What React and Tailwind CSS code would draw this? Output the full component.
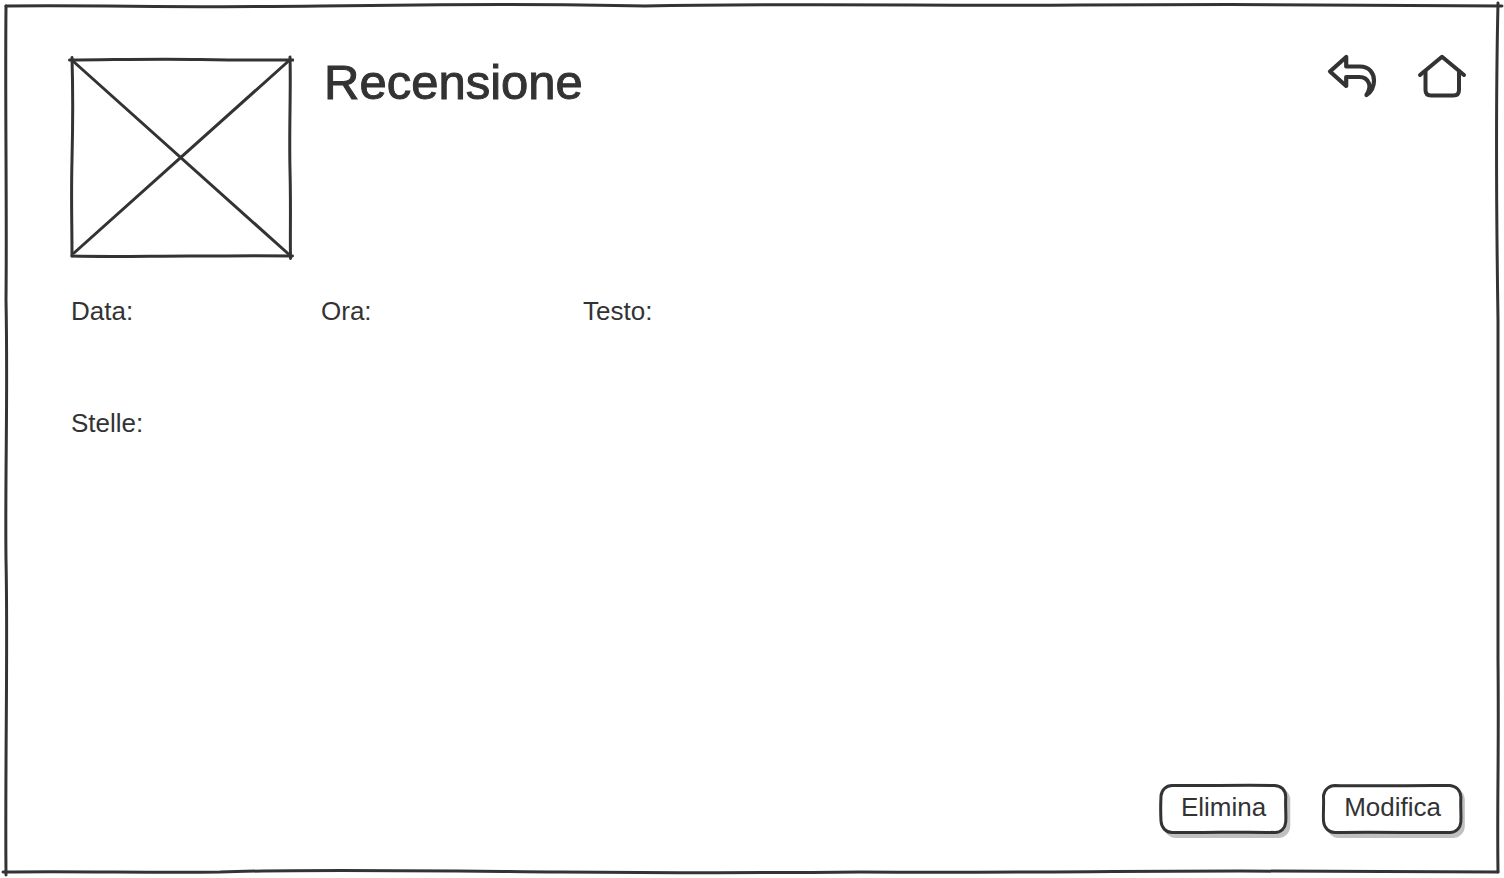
const INK = "#333333";

function Frame() {
  return (
    <svg
      className="pointer-events-none absolute inset-0 h-full w-full"
      viewBox="0 0 1504 878"
      preserveAspectRatio="none"
      fill="none"
      stroke={INK}
      strokeWidth="3"
      strokeLinecap="round"
      aria-hidden="true"
    >
      <path d="M6 6 C110 5 180 8 320 6 C450 4 570 4 645 6 C800 3 940 6 1080 5 S1380 5 1502 6" />
      <path d="M1498 3 C1496 90 1496 190 1498 320 C1499 440 1497 560 1498 660 S1497 800 1498 872" />
      <path d="M3 872 C80 871 150 873 220 872 C300 869 440 871 560 872 S760 873 860 872 C1020 873 1100 871 1240 871 S1420 872 1498 872" />
      <path d="M6 6 C5 110 7 200 6 300 C8 400 5 470 6 560 C8 650 5 760 6 875" />
    </svg>
  );
}

function ImagePlaceholder() {
  return (
    <svg
      className="h-[206px] w-[226px] shrink-0"
      viewBox="68 54 226 206"
      fill="none"
      stroke={INK}
      strokeWidth="3"
      strokeLinecap="round"
      role="img"
      aria-label="Immagine"
    >
      <path d="M69.500 60 C110 60 150 58.500 200 59.500 S260 60 293 60" />
      <path d="M290 57 C291 90 289 130 290 170 S290 230 290.500 258.500" />
      <path d="M72 256 C110 257 150 256 190 256 S250 255.500 292.500 256" />
      <path d="M72 57.500 C73 90 73 120 72 160 S72 220 72 256" />
      <path d="M74 62 L288.500 254" />
      <path d="M288 61.500 L74 253" />
    </svg>
  );
}

function BackIcon() {
  return (
    <svg
      className="h-[46px] w-[50px]"
      viewBox="1327 53 50 46"
      fill="none"
      stroke={INK}
      strokeWidth="4.2"
      strokeLinecap="round"
      strokeLinejoin="round"
      aria-hidden="true"
    >
      <path d="M1330 71.500 L1346.200 57 V66.500 H1360 C1369.500 66.500 1374 73.500 1374 80.500 C1374 87.500 1371 92 1366.500 95 C1369.500 90.500 1370.500 87 1368.800 83 C1367 78.500 1363.500 77 1359.500 77 H1346.200 V86 Z" />
    </svg>
  );
}

function HomeIcon() {
  return (
    <svg
      className="h-[46px] w-[50px]"
      viewBox="1417 53 50 46"
      fill="none"
      stroke={INK}
      strokeWidth="4"
      strokeLinecap="round"
      strokeLinejoin="round"
      aria-hidden="true"
    >
      <path d="M1420 75 L1442 56.800 L1464 75" />
      <path d="M1425.500 71 V90 Q1425.500 95.500 1431 95.500 H1453.500 Q1459 95.500 1459 90 V71" />
    </svg>
  );
}

function SketchButton({ children, width, outline }) {
  return (
    <button
      type="button"
      className="relative h-[50px] px-[21px] pb-1 text-[26px] leading-7"
    >
      <svg
        className="absolute inset-0 h-full w-full overflow-visible"
        viewBox={`0 0 ${width} 50`}
        preserveAspectRatio="none"
        strokeWidth="3"
        strokeLinejoin="round"
        aria-hidden="true"
      >
        <rect x="4" y="4" width={width - 1} height="50" rx="12" fill="#c0c0c0" />
        <path d={outline} fill="white" stroke={INK} />
      </svg>
      <span className="relative">{children}</span>
    </button>
  );
}

export default function App() {
  return (
    <div className="relative flex min-h-screen flex-col bg-white font-['Liberation_Sans',Arial,sans-serif] text-[#333333]">
      <Frame />
      <header className="flex items-start pt-[53px] pr-[37px] pl-[68px]">
        <div className="pt-px">
          <ImagePlaceholder />
        </div>
        <h1 className="ml-[30px] pt-px text-[49px] leading-14 font-normal [-webkit-text-stroke:1px_#333333]">
          Recensione
        </h1>
        <nav className="ml-auto flex gap-10">
          <a href="#indietro" aria-label="Indietro">
            <BackIcon />
          </a>
          <a href="#home" aria-label="Home">
            <HomeIcon />
          </a>
        </nav>
      </header>
      <main className="mt-[37px] grid grid-cols-[250px_262px_1fr] gap-y-[84px] pr-[42px] pl-[71px] text-[26px] leading-7">
        <p>Data:</p>
        <p>Ora:</p>
        <p>Testo:</p>
        <p>Stelle:</p>
      </main>
      <footer className="mt-auto flex justify-end gap-9 pr-[42px] pb-11">
        <SketchButton
          width={126}
          outline="M12 1.500 C45 2 70 1 113 1.500 C120 1.500 124.500 6 124.500 13 C124 24 125 30 124.500 38 C124 44 120 48.500 114 48.500 C80 47.500 50 49 12 48.500 C6 48.500 1.500 44 1 37 C0.500 28 0.500 22 1 12 C1.500 6 6 1.500 12 1.500 Z"
        >
          Elimina
        </SketchButton>
        <SketchButton
          width={140}
          outline="M12 1.500 C45 2.500 85 1 128 1.500 C134 2 138.500 6 139 13 C138.500 24 139.500 30 139 38 C138.500 44 134 48.500 128 48.500 C95 49 55 47.500 12 48.500 C6 48.500 1 44 0.500 37 C0 28 1 22 0.500 12 C1 6 6 1.500 12 1.500 Z"
        >
          Modifica
        </SketchButton>
      </footer>
    </div>
  );
}
